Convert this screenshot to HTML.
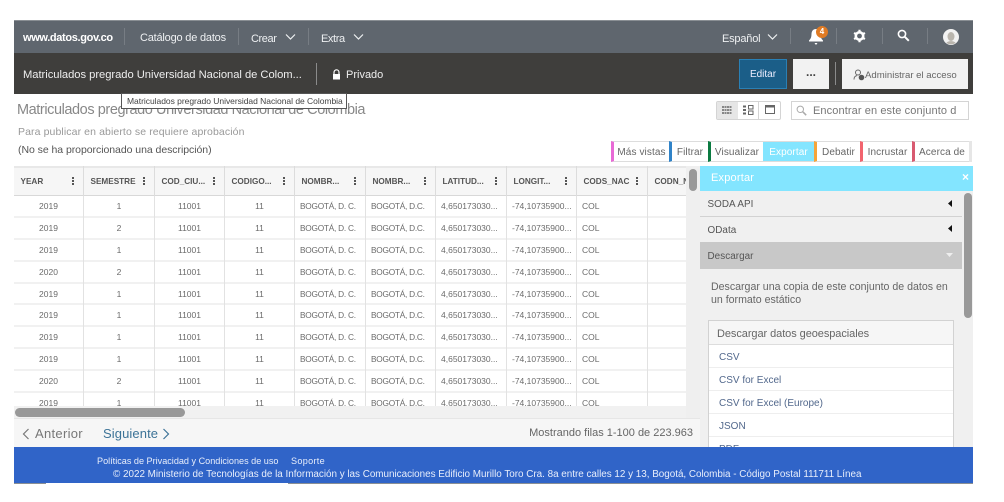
<!DOCTYPE html>
<html lang="es"><head><meta charset="utf-8"><title>Matriculados pregrado</title>
<style>
html,body{margin:0;padding:0;background:#fff;width:1004px;height:502px;overflow:hidden}
body{position:relative;font-family:"Liberation Sans",sans-serif;color:#666}
.a{position:absolute;white-space:nowrap}
.nav{color:#eef0f2;font-size:11px;letter-spacing:-.2px}
.sep{position:absolute;width:1px;background:#777d84}
#tbl{position:absolute;left:14px;top:166px;width:672px;height:240px;overflow:hidden;background:#fff}
.r{display:flex;height:21.9px;box-sizing:border-box;box-shadow:inset 0 -2px 0 #f1f1f1}
.h{height:30px;background:#f6f6f6;box-shadow:inset 0 2px 0 #e8e8e8,inset 0 -1px 0 #d8d8d8}
.r div{flex:none;box-sizing:border-box;border-right:1px solid #e2e2e2;font-size:8.5px;line-height:20px;color:#6b6b6b;overflow:hidden;white-space:nowrap}
.r:not(.h) div:nth-child(5),.r:not(.h) div:nth-child(6){font-size:8.3px;letter-spacing:-.25px}
.h div{font-size:8.2px;font-weight:bold;line-height:31px;color:#555;padding-left:6.5px;position:relative;border-right:1px solid #dcdcdc}
.h div i{position:absolute;right:9px;top:11px;width:2px;height:2px;background:#555;box-shadow:0 3px 0 #555,0 6px 0 #555}
.c{text-align:center}.l{padding-left:5px}
.w1{width:70px}.w2{width:71px}
.tab{position:absolute;top:141px;height:21px;box-sizing:border-box;border-left:3px solid;border-top:1px solid #ddd;border-bottom:1px solid #ddd;background:#fff;font-size:10px;line-height:21px;color:#666;text-align:center;letter-spacing:.1px;white-space:nowrap}
.sr{position:absolute;left:700px;width:262px;box-sizing:border-box;padding-left:7.5px;font-size:9.9px;color:#555;letter-spacing:.05px}
.fmt{position:absolute;left:709px;width:244px;height:23px;overflow:hidden;background:#fff;border-bottom:1px solid #eee;box-sizing:border-box;padding-left:10px;font-size:10px;line-height:25px;color:#52688c}
</style></head><body>

<div class="a" style="left:14px;top:20px;width:959px;height:33px;background:#5f666e;border-top:1px solid #8a8f94;box-sizing:border-box"></div>
<div class="a" style="left:14px;top:53px;width:959px;height:41px;background:#3f3e3c"></div>

<div class="a nav" style="left:23px;top:32px;font-weight:bold;font-size:11px;letter-spacing:-.35px;color:#fff">www.datos.gov.co</div>
<div class="sep" style="left:124px;top:28px;height:17px"></div>
<div class="a nav" style="left:140px;top:32px">Catálogo de datos</div>
<div class="sep" style="left:238px;top:28px;height:17px"></div>
<div class="a nav" style="left:251px;top:33px;letter-spacing:-.4px">Crear</div>
<svg class="a" style="left:285px;top:33px" width="11" height="8" viewBox="0 0 11 8"><path d="M1 1.500l4.500 4.500L10 1.500" fill="none" stroke="#eef0f2" stroke-width="1.200"/></svg>
<div class="sep" style="left:308px;top:28px;height:17px"></div>
<div class="a nav" style="left:321px;top:33px;letter-spacing:-.4px">Extra</div>
<svg class="a" style="left:353px;top:33px" width="11" height="8" viewBox="0 0 11 8"><path d="M1 1.500l4.500 4.500L10 1.500" fill="none" stroke="#eef0f2" stroke-width="1.200"/></svg>

<div class="a nav" style="left:722px;top:33px">Español</div>
<svg class="a" style="left:767px;top:33px" width="11" height="8" viewBox="0 0 11 8"><path d="M1 1.500l4.500 4.500L10 1.500" fill="none" stroke="#eef0f2" stroke-width="1.200"/></svg>
<div class="sep" style="left:790px;top:28px;height:16px"></div>
<svg class="a" style="left:808px;top:28px" width="18" height="18" viewBox="0 0 18 18"><path d="M8 1c-3 0-4.500 2.400-4.500 5 0 3-.8 5-2.500 6.500v1h14v-1C13.300 11 12.500 9 12.500 6 12.500 3.400 11 1 8 1zM6.500 15h3L8 17z" fill="#fff"/></svg>
<div class="a" style="left:816px;top:26px;width:12px;height:12px;border-radius:50%;background:#e07b24;color:#fff;font-size:8px;font-weight:bold;line-height:12px;text-align:center">4</div>
<div class="sep" style="left:836px;top:28px;height:16px"></div>
<svg class="a" style="left:853px;top:29px" width="13" height="14" viewBox="0 0 13 14"><circle cx="6.500" cy="7" r="3.700" fill="none" stroke="#fff" stroke-width="2.600"/><path d="M6.500 .8v2M6.500 11.200v2M1.100 3.900l1.700 1M10.200 9.100l1.700 1M1.100 10.100l1.700-1M10.200 4.900l1.700-1" stroke="#fff" stroke-width="2.200"/></svg>
<div class="sep" style="left:882px;top:28px;height:16px"></div>
<svg class="a" style="left:897px;top:29px" width="13" height="13" viewBox="0 0 13 13"><circle cx="5" cy="5" r="3.600" fill="none" stroke="#fff" stroke-width="1.600"/><path d="M7.800 7.800l4 4" stroke="#fff" stroke-width="2"/></svg>
<div class="sep" style="left:927px;top:28px;height:16px"></div>
<svg class="a" style="left:943px;top:29px" width="16" height="16" viewBox="0 0 16 16"><circle cx="8" cy="8" r="8" fill="#f2f2f2"/><ellipse cx="8" cy="7.500" rx="3.500" ry="4.500" fill="#b9b5ad"/><path d="M3.500 14c1-2.500 8-2.500 9 0a8 8 0 0 1-9 0z" fill="#b9b5ad"/></svg>

<div class="a" style="left:23px;top:69px;font-size:11.200px;letter-spacing:-.03px;color:#eee">Matriculados pregrado Universidad Nacional de Colom...</div>
<div class="sep" style="left:316px;top:63px;height:22px;background:#8b8b8b"></div>
<svg class="a" style="left:332px;top:69px" width="9" height="11" viewBox="0 0 9 11"><path d="M2 5V3.300a2.500 2.500 0 0 1 5 0V5" fill="none" stroke="#fff" stroke-width="1.200"/><rect x="1" y="5" width="7" height="5.500" fill="#fff"/></svg>
<div class="a" style="left:346px;top:69px;font-size:11px;color:#eee">Privado</div>

<div class="a" style="left:739px;top:59px;width:48px;height:30px;box-sizing:border-box;background:#1b5e88;border:1px solid #2a80b5;color:#eef;font-size:10px;line-height:30px;text-align:center">Editar</div>
<div class="a" style="left:793px;top:59px;width:36px;height:30px;background:#f2f2f2;color:#444;font-size:12px;font-weight:bold;line-height:26px;text-align:center">...</div>
<div class="sep" style="left:835px;top:62px;height:23px;background:#8b8b8b"></div>
<div class="a" style="left:842px;top:59px;width:126px;height:30px;background:#f2f2f2"></div>
<svg class="a" style="left:853px;top:69px" width="12" height="12" viewBox="0 0 12 12"><circle cx="5" cy="3.500" r="2.500" fill="none" stroke="#666" stroke-width="1"/><path d="M1 10.500c0-3 1.500-3.500 3-4" fill="none" stroke="#666"/><circle cx="8.500" cy="8.500" r="2.800" fill="#555"/></svg>
<div class="a" style="left:865px;top:70px;font-size:9.600px;color:#666">Administrar el acceso</div>

<div class="a" style="left:17px;top:102px;font-size:14.500px;letter-spacing:-.42px;color:#888">Matriculados pregrado Universidad Nacional de Colombia</div>
<div class="a" style="left:121px;top:93px;width:226px;height:16px;box-sizing:border-box;background:#fff;border:1px solid #555;font-size:8.500px;line-height:14px;padding-left:5px;color:#444;letter-spacing:-.03px">Matriculados pregrado Universidad Nacional de Colombia</div>
<div class="a" style="left:18px;top:126px;font-size:10.500px;letter-spacing:.1px;color:#999">Para publicar en abierto se requiere aprobación</div>
<div class="a" style="left:18px;top:144px;font-size:10.500px;letter-spacing:-.05px;color:#555">(No se ha proporcionado una descripción)</div>

<div class="a" style="left:716px;top:101px;width:65px;height:19px;box-sizing:border-box;border:1px solid #d4d4d4;border-radius:2px;background:#fff"></div>
<div class="a" style="left:717px;top:102px;width:21px;height:17px;background:#e6e6e6"></div>
<div class="sep" style="left:758px;top:102px;height:17px;background:#d4d4d4"></div>
<svg class="a" style="left:722px;top:106px" width="11" height="8" viewBox="0 0 11 8"><path d="M0 1h10M0 4h10M0 7h10" stroke="#666" stroke-width="1.600" stroke-dasharray="2 .5"/></svg>
<svg class="a" style="left:743px;top:105px" width="11" height="10" viewBox="0 0 11 10"><path d="M0 1.500h3M0 5h3M0 8.500h3" stroke="#666" stroke-width="2"/><path d="M5.500 .5h4.500v3.500H5.500zM5.500 6h4.500v3.500H5.500z" fill="none" stroke="#666"/></svg>
<svg class="a" style="left:765px;top:105px" width="11" height="10" viewBox="0 0 11 10"><path d="M.5.500h9v8h-9z" fill="none" stroke="#666"/><path d="M0 1.500h10" stroke="#666" stroke-width="2"/></svg>
<div class="a" style="left:791px;top:101px;width:178px;height:19px;box-sizing:border-box;border:1px solid #d4d4d4;background:#fff;overflow:hidden"></div>
<svg class="a" style="left:796px;top:105px" width="11" height="11" viewBox="0 0 11 11"><circle cx="4.300" cy="4.300" r="3.200" fill="none" stroke="#aaa"/><path d="M6.700 6.700l3.500 3.500" stroke="#aaa" stroke-width="1.500"/></svg>
<div class="a" style="left:813px;top:105px;width:144px;overflow:hidden;font-size:11px;letter-spacing:.1px;color:#777">Encontrar en este conjunto de datos</div>

<div class="a" style="left:611px;top:141px;width:361px;height:21px;background:#e6e6e6"></div>
<div class="tab" style="left:611px;width:58px;border-left-color:#e86ad6">Más vistas</div>
<div class="tab" style="left:669px;width:39px;border-left-color:#3083c8">Filtrar</div>
<div class="tab" style="left:708px;width:55px;border-left-color:#0b7a41">Visualizar</div>
<div class="tab" style="left:763px;width:51px;border-left:0;background:#83e5ff;color:#fff">Exportar</div>
<div class="tab" style="left:814px;width:46px;border-left-color:#f5a43a">Debatir</div>
<div class="tab" style="left:860px;width:52px;border-left-color:#f2646e">Incrustar</div>
<div class="tab" style="left:912px;width:57px;border-left-color:#d85a70">Acerca de</div>

<div id="tbl">
<div class="r h"><div class="w1">YEAR<i></i></div><div class="w2">SEMESTRE<i></i></div><div class="w1">COD_CIU...<i></i></div><div class="w1">CODIGO...<i></i></div><div class="w2">NOMBR...<i></i></div><div class="w1">NOMBR...<i></i></div><div class="w2">LATITUD...<i></i></div><div class="w1">LONGIT...<i></i></div><div class="w2">CODS_NAC<i></i></div><div style="width:39px">CODN_N</div></div>
<div class="r"><div class="w1 c">2019</div><div class="w2 c">1</div><div class="w1 c">11001</div><div class="w1 c">11</div><div class="w2 l">BOGOTÁ, D. C.</div><div class="w1 l">BOGOTÁ, D.C.</div><div class="w2 l">4,650173030...</div><div class="w1 l">-74,10735900...</div><div class="w2 l">COL</div><div style="width:39px;border:0"></div></div>
<div class="r"><div class="w1 c">2019</div><div class="w2 c">2</div><div class="w1 c">11001</div><div class="w1 c">11</div><div class="w2 l">BOGOTÁ, D. C.</div><div class="w1 l">BOGOTÁ, D.C.</div><div class="w2 l">4,650173030...</div><div class="w1 l">-74,10735900...</div><div class="w2 l">COL</div><div style="width:39px;border:0"></div></div>
<div class="r"><div class="w1 c">2019</div><div class="w2 c">1</div><div class="w1 c">11001</div><div class="w1 c">11</div><div class="w2 l">BOGOTÁ, D. C.</div><div class="w1 l">BOGOTÁ, D.C.</div><div class="w2 l">4,650173030...</div><div class="w1 l">-74,10735900...</div><div class="w2 l">COL</div><div style="width:39px;border:0"></div></div>
<div class="r"><div class="w1 c">2020</div><div class="w2 c">2</div><div class="w1 c">11001</div><div class="w1 c">11</div><div class="w2 l">BOGOTÁ, D. C.</div><div class="w1 l">BOGOTÁ, D.C.</div><div class="w2 l">4,650173030...</div><div class="w1 l">-74,10735900...</div><div class="w2 l">COL</div><div style="width:39px;border:0"></div></div>
<div class="r"><div class="w1 c">2019</div><div class="w2 c">1</div><div class="w1 c">11001</div><div class="w1 c">11</div><div class="w2 l">BOGOTÁ, D. C.</div><div class="w1 l">BOGOTÁ, D.C.</div><div class="w2 l">4,650173030...</div><div class="w1 l">-74,10735900...</div><div class="w2 l">COL</div><div style="width:39px;border:0"></div></div>
<div class="r"><div class="w1 c">2019</div><div class="w2 c">1</div><div class="w1 c">11001</div><div class="w1 c">11</div><div class="w2 l">BOGOTÁ, D. C.</div><div class="w1 l">BOGOTÁ, D.C.</div><div class="w2 l">4,650173030...</div><div class="w1 l">-74,10735900...</div><div class="w2 l">COL</div><div style="width:39px;border:0"></div></div>
<div class="r"><div class="w1 c">2019</div><div class="w2 c">1</div><div class="w1 c">11001</div><div class="w1 c">11</div><div class="w2 l">BOGOTÁ, D. C.</div><div class="w1 l">BOGOTÁ, D.C.</div><div class="w2 l">4,650173030...</div><div class="w1 l">-74,10735900...</div><div class="w2 l">COL</div><div style="width:39px;border:0"></div></div>
<div class="r"><div class="w1 c">2019</div><div class="w2 c">1</div><div class="w1 c">11001</div><div class="w1 c">11</div><div class="w2 l">BOGOTÁ, D. C.</div><div class="w1 l">BOGOTÁ, D.C.</div><div class="w2 l">4,650173030...</div><div class="w1 l">-74,10735900...</div><div class="w2 l">COL</div><div style="width:39px;border:0"></div></div>
<div class="r"><div class="w1 c">2020</div><div class="w2 c">2</div><div class="w1 c">11001</div><div class="w1 c">11</div><div class="w2 l">BOGOTÁ, D. C.</div><div class="w1 l">BOGOTÁ, D.C.</div><div class="w2 l">4,650173030...</div><div class="w1 l">-74,10735900...</div><div class="w2 l">COL</div><div style="width:39px;border:0"></div></div>
<div class="r"><div class="w1 c">2019</div><div class="w2 c">1</div><div class="w1 c">11001</div><div class="w1 c">11</div><div class="w2 l">BOGOTÁ, D. C.</div><div class="w1 l">BOGOTÁ, D.C.</div><div class="w2 l">4,650173030...</div><div class="w1 l">-74,10735900...</div><div class="w2 l">COL</div><div style="width:39px;border:0"></div></div>
</div>

<div class="a" style="left:686px;top:166px;width:14px;height:281px;background:#efefef"></div>
<div class="a" style="left:689px;top:169px;width:8px;height:22px;border-radius:4px;background:#999"></div>
<div class="a" style="left:14px;top:406px;width:672px;height:12px;background:#f1f1f1"></div>
<div class="a" style="left:15px;top:408px;width:170px;height:9px;border-radius:5px;background:#999"></div>
<div class="a" style="left:14px;top:418px;width:686px;height:29px;background:#f6f6f6;border-top:1px solid #e6e6e6;box-sizing:border-box"></div>
<svg class="a" style="left:22px;top:428px" width="8" height="12" viewBox="0 0 8 12"><path d="M6.500 1L1.500 6l5 5" fill="none" stroke="#777" stroke-width="1.200"/></svg>
<div class="a" style="left:35px;top:426px;font-size:13px;letter-spacing:.3px;color:#777">Anterior</div>
<div class="a" style="left:103px;top:426px;font-size:13px;letter-spacing:.1px;color:#3c7397">Siguiente</div>
<svg class="a" style="left:162px;top:428px" width="8" height="12" viewBox="0 0 8 12"><path d="M1.500 1l5 5-5 5" fill="none" stroke="#3c7397" stroke-width="1.200"/></svg>
<div class="a" style="right:311px;top:427px;font-size:11px;color:#666">Mostrando filas 1-100 de 223.963</div>

<div class="a" style="left:700px;top:166px;width:273px;height:281px;background:#f0f0f0"></div>
<div class="a" style="left:700px;top:166px;width:273px;height:25px;background:#83e5ff"></div>
<div class="a" style="left:711px;top:172px;font-size:11px;letter-spacing:.2px;color:#fff">Exportar</div>
<div class="a" style="left:962px;top:170px;font-size:12px;font-weight:bold;color:#fff">×</div>
<div class="sr" style="top:191px;height:26px;line-height:27px;border-bottom:1px solid #d2d2d2">SODA API</div>
<div class="sr" style="top:217px;height:25px;line-height:27px">OData</div>
<div class="sr" style="top:242px;height:27px;line-height:29px;background:#c8c8c8">Descargar</div>
<svg class="a" style="left:948px;top:200px" width="4" height="7"><path d="M4 0v7L0 3.500z" fill="#111"/></svg>
<svg class="a" style="left:948px;top:225px" width="4" height="7"><path d="M4 0v7L0 3.500z" fill="#111"/></svg>
<svg class="a" style="left:946px;top:253px" width="7" height="4"><path d="M0 0h7L3.500 4z" fill="#eee"/></svg>
<div class="a" style="left:964px;top:193px;width:8px;height:125px;border-radius:4px;background:#999"></div>
<div class="a" style="left:711px;top:281px;font-size:10.600px;line-height:13px;color:#666">Descargar una copia de este conjunto de datos en<br>un formato estático</div>
<div class="a" style="left:708px;top:320px;width:246px;height:127px;box-sizing:border-box;border:1px solid #d2d2d2;border-bottom:0;background:#f6f6f6"></div>
<div class="a" style="left:717px;top:328px;font-size:11px;letter-spacing:-.07px;color:#666">Descargar datos geoespaciales</div>
<div class="a" style="left:709px;top:344px;width:244px;height:1px;background:#ddd"></div>
<div class="fmt" style="top:345px">CSV</div>
<div class="fmt" style="top:368px">CSV for Excel</div>
<div class="fmt" style="top:391px">CSV for Excel (Europe)</div>
<div class="fmt" style="top:414px">JSON</div>
<div class="fmt" style="top:437px;height:10px;border:0">PDF</div>

<div class="a" style="left:14px;top:447px;width:959px;height:36px;background:#3064c8;box-shadow:0 1px 0 #8a8f94"></div>
<div class="a" style="left:46px;top:483px;width:242px;height:1px;background:#fff"></div>
<div class="a" style="left:97px;top:456px;font-size:9.100px;color:#e8eefb">Políticas de Privacidad y Condiciones de uso</div>
<div class="a" style="left:291px;top:456px;font-size:9.100px;letter-spacing:.3px;color:#e8eefb">Soporte</div>
<div class="a" style="left:113px;top:469px;font-size:9.900px;letter-spacing:-.01px;color:#e8eefb">© 2022 Ministerio de Tecnologías de la Información y las Comunicaciones Edificio Murillo Toro Cra. 8a entre calles 12 y 13, Bogotá, Colombia - Código Postal 111711 Línea</div>
</body></html>
